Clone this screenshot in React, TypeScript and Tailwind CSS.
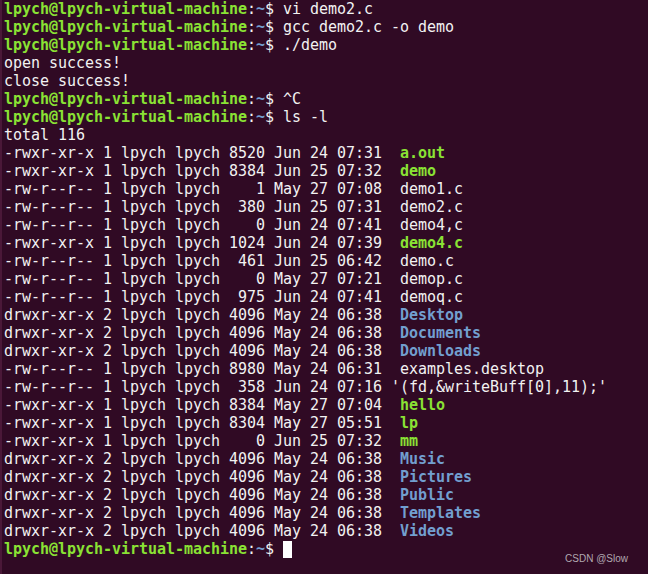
import React from "react";

const G = "text-[#8ae234] font-bold";
const B = "text-[#729fcf] font-bold";

function Prompt({ cmd, cursor }: { cmd?: string; cursor?: boolean }) {
  return (
    <div className="h-[18px]">
      <span className={G}>lpych@lpych-virtual-machine</span>
      <span>:</span>
      <span className={B}>~</span>
      <span>$ </span>
      {cmd && <span>{cmd}</span>}
      {cursor && <span className="inline-block w-[9px] h-[17px] bg-white align-[-4px]" />}
    </div>
  );
}

type Entry = [string, string, string, string, string, string, string | null];

const entries: Entry[] = [
  ["-rwxr-xr-x", "1", "8520", "Jun 24 07:31", " ", "a.out", G],
  ["-rwxr-xr-x", "1", "8384", "Jun 25 07:32", " ", "demo", G],
  ["-rw-r--r--", "1", "   1", "May 27 07:08", " ", "demo1.c", null],
  ["-rw-r--r--", "1", " 380", "Jun 25 07:31", " ", "demo2.c", null],
  ["-rw-r--r--", "1", "   0", "Jun 24 07:41", " ", "demo4,c", null],
  ["-rwxr-xr-x", "1", "1024", "Jun 24 07:39", " ", "demo4.c", G],
  ["-rw-r--r--", "1", " 461", "Jun 25 06:42", " ", "demo.c", null],
  ["-rw-r--r--", "1", "   0", "May 27 07:21", " ", "demop.c", null],
  ["-rw-r--r--", "1", " 975", "Jun 24 07:41", " ", "demoq.c", null],
  ["drwxr-xr-x", "2", "4096", "May 24 06:38", " ", "Desktop", B],
  ["drwxr-xr-x", "2", "4096", "May 24 06:38", " ", "Documents", B],
  ["drwxr-xr-x", "2", "4096", "May 24 06:38", " ", "Downloads", B],
  ["-rw-r--r--", "1", "8980", "May 24 06:31", " ", "examples.desktop", null],
  ["-rw-r--r--", "1", " 358", "Jun 24 07:16", "", "'(fd,&writeBuff[0],11);'", null],
  ["-rwxr-xr-x", "1", "8384", "May 27 07:04", " ", "hello", G],
  ["-rwxr-xr-x", "1", "8304", "May 27 05:51", " ", "lp", G],
  ["-rwxr-xr-x", "1", "   0", "Jun 25 07:32", " ", "mm", G],
  ["drwxr-xr-x", "2", "4096", "May 24 06:38", " ", "Music", B],
  ["drwxr-xr-x", "2", "4096", "May 24 06:38", " ", "Pictures", B],
  ["drwxr-xr-x", "2", "4096", "May 24 06:38", " ", "Public", B],
  ["drwxr-xr-x", "2", "4096", "May 24 06:38", " ", "Templates", B],
  ["drwxr-xr-x", "2", "4096", "May 24 06:38", " ", "Videos", B],
];

export default function App() {
  return (
    <div className="w-[648px] h-[574px] bg-[#300a24] relative overflow-hidden flex">
      <div className="w-[2px] h-full bg-[#4a1838] shrink-0" />
      <div
        className="pl-[2px] pt-0 text-[15px] leading-[18px] text-[#f2f2f2] whitespace-pre tracking-[-0.03px]"
        style={{ fontFamily: '"DejaVu Sans Mono", "Liberation Mono", monospace' }}
      >
        <Prompt cmd="vi demo2.c" />
        <Prompt cmd="gcc demo2.c -o demo" />
        <Prompt cmd="./demo" />
        <div className="h-[18px]">open success!</div>
        <div className="h-[18px]">close success!</div>
        <Prompt cmd="^C" />
        <Prompt cmd="ls -l" />
        <div className="h-[18px]">total 116</div>
        {entries.map((e, i) => (
          <div key={i} className="h-[18px]">
            <span>{`${e[0]} ${e[1]} lpych lpych ${e[2]} ${e[3]} ${e[4]}`}</span>
            <span className={e[6] ?? ""}>{e[5]}</span>
          </div>
        ))}
        <Prompt cursor />
      </div>
      <div
        className="absolute right-[20px] bottom-[8px] text-[10px] text-[#b0a8b0]"
        style={{ fontFamily: '"Liberation Sans", Arial, sans-serif' }}
      >
        CSDN @Slow
      </div>
    </div>
  );
}
